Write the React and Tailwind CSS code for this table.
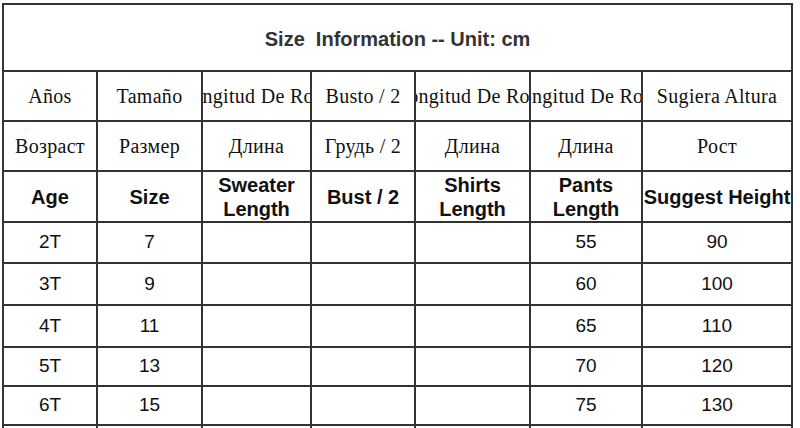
const cols = [94, 105, 109, 104, 115, 112, 150];

const spanish = ['Años', 'Tamaño', 'Longitud De Ropa', 'Busto / 2', 'Longitud De Ropa', 'Longitud De Ropa', 'Sugiera Altura'];
const russian = ['Возраст', 'Размер', 'Длина', 'Грудь / 2', 'Длина', 'Длина', 'Рост'];
const english = [['Age'], ['Size'], ['Sweater', 'Length'], ['Bust / 2'], ['Shirts', 'Length'], ['Pants', 'Length'], ['Suggest Height']];

const rows = [
  { age: '2T', size: '7', pants: '55', height: '90', h: 'h-[41px]' },
  { age: '3T', size: '9', pants: '60', height: '100', h: 'h-[42px]' },
  { age: '4T', size: '11', pants: '65', height: '110', h: 'h-[42px]' },
  { age: '5T', size: '13', pants: '70', height: '120', h: 'h-[39px]' },
  { age: '6T', size: '15', pants: '75', height: '130', h: 'h-[39px]' },
  { age: '7T', size: '17', pants: '80', height: '140', h: 'h-[40px]' },
];

const cell = 'border-2 border-[#333] p-0 text-center align-middle';
const serif = { fontFamily: '"Liberation Serif", "Times New Roman", serif' };

// long labels stay centred and get clipped on both sides, like the original sheet
function ClipText({ children }) {
  return (
    <div className="flex justify-center overflow-hidden whitespace-nowrap">
      <span>{children}</span>
    </div>
  );
}

export default function App() {
  return (
    <div className="w-[800px] h-[428px] overflow-hidden bg-white pl-[2px] pt-[3px] font-['Liberation_Sans',Arial,sans-serif]">
      <table className="table-fixed border-collapse w-[791px]">
        <colgroup>
          {cols.map((w, i) => (
            <col key={i} style={{ width: w }} />
          ))}
        </colgroup>
        <tbody>
          <tr className="h-[67px]">
            <td colSpan={7} className={cell}>
              <span className="whitespace-pre text-[20px] font-bold text-[#333] relative top-[1px]">Size  Information -- Unit: cm</span>
            </td>
          </tr>
          <tr className="h-[50px]">
            {spanish.map((t, i) => (
              <td key={i} className={`${cell} text-[20px] tracking-[0.3px] text-[#111]`} style={serif}>
                <ClipText>{t}</ClipText>
              </td>
            ))}
          </tr>
          <tr className="h-[50px]">
            {russian.map((t, i) => (
              <td key={i} className={`${cell} text-[20px] tracking-[0.3px] text-[#111]`} style={serif}>
                <ClipText>{t}</ClipText>
              </td>
            ))}
          </tr>
          <tr className="h-[51px]">
            {english.map((lines, i) => (
              <td key={i} className={`${cell} text-[20px] font-bold leading-[24px] text-[#111]`}>
                <ClipText>
                  {lines.map((l, j) => (
                    <span key={j} className="block">{l}</span>
                  ))}
                </ClipText>
              </td>
            ))}
          </tr>
          {rows.map((r) => (
            <tr key={r.age} className={r.h}>
              <td className={`${cell} text-[19px] text-[#111]`}>{r.age}</td>
              <td className={`${cell} text-[19px] text-[#111]`}>{r.size}</td>
              <td className={cell}></td>
              <td className={cell}></td>
              <td className={cell}></td>
              <td className={`${cell} text-[19px] text-[#111]`}>{r.pants}</td>
              <td className={`${cell} text-[19px] text-[#111]`}>{r.height}</td>
            </tr>
          ))}
        </tbody>
      </table>
    </div>
  );
}
